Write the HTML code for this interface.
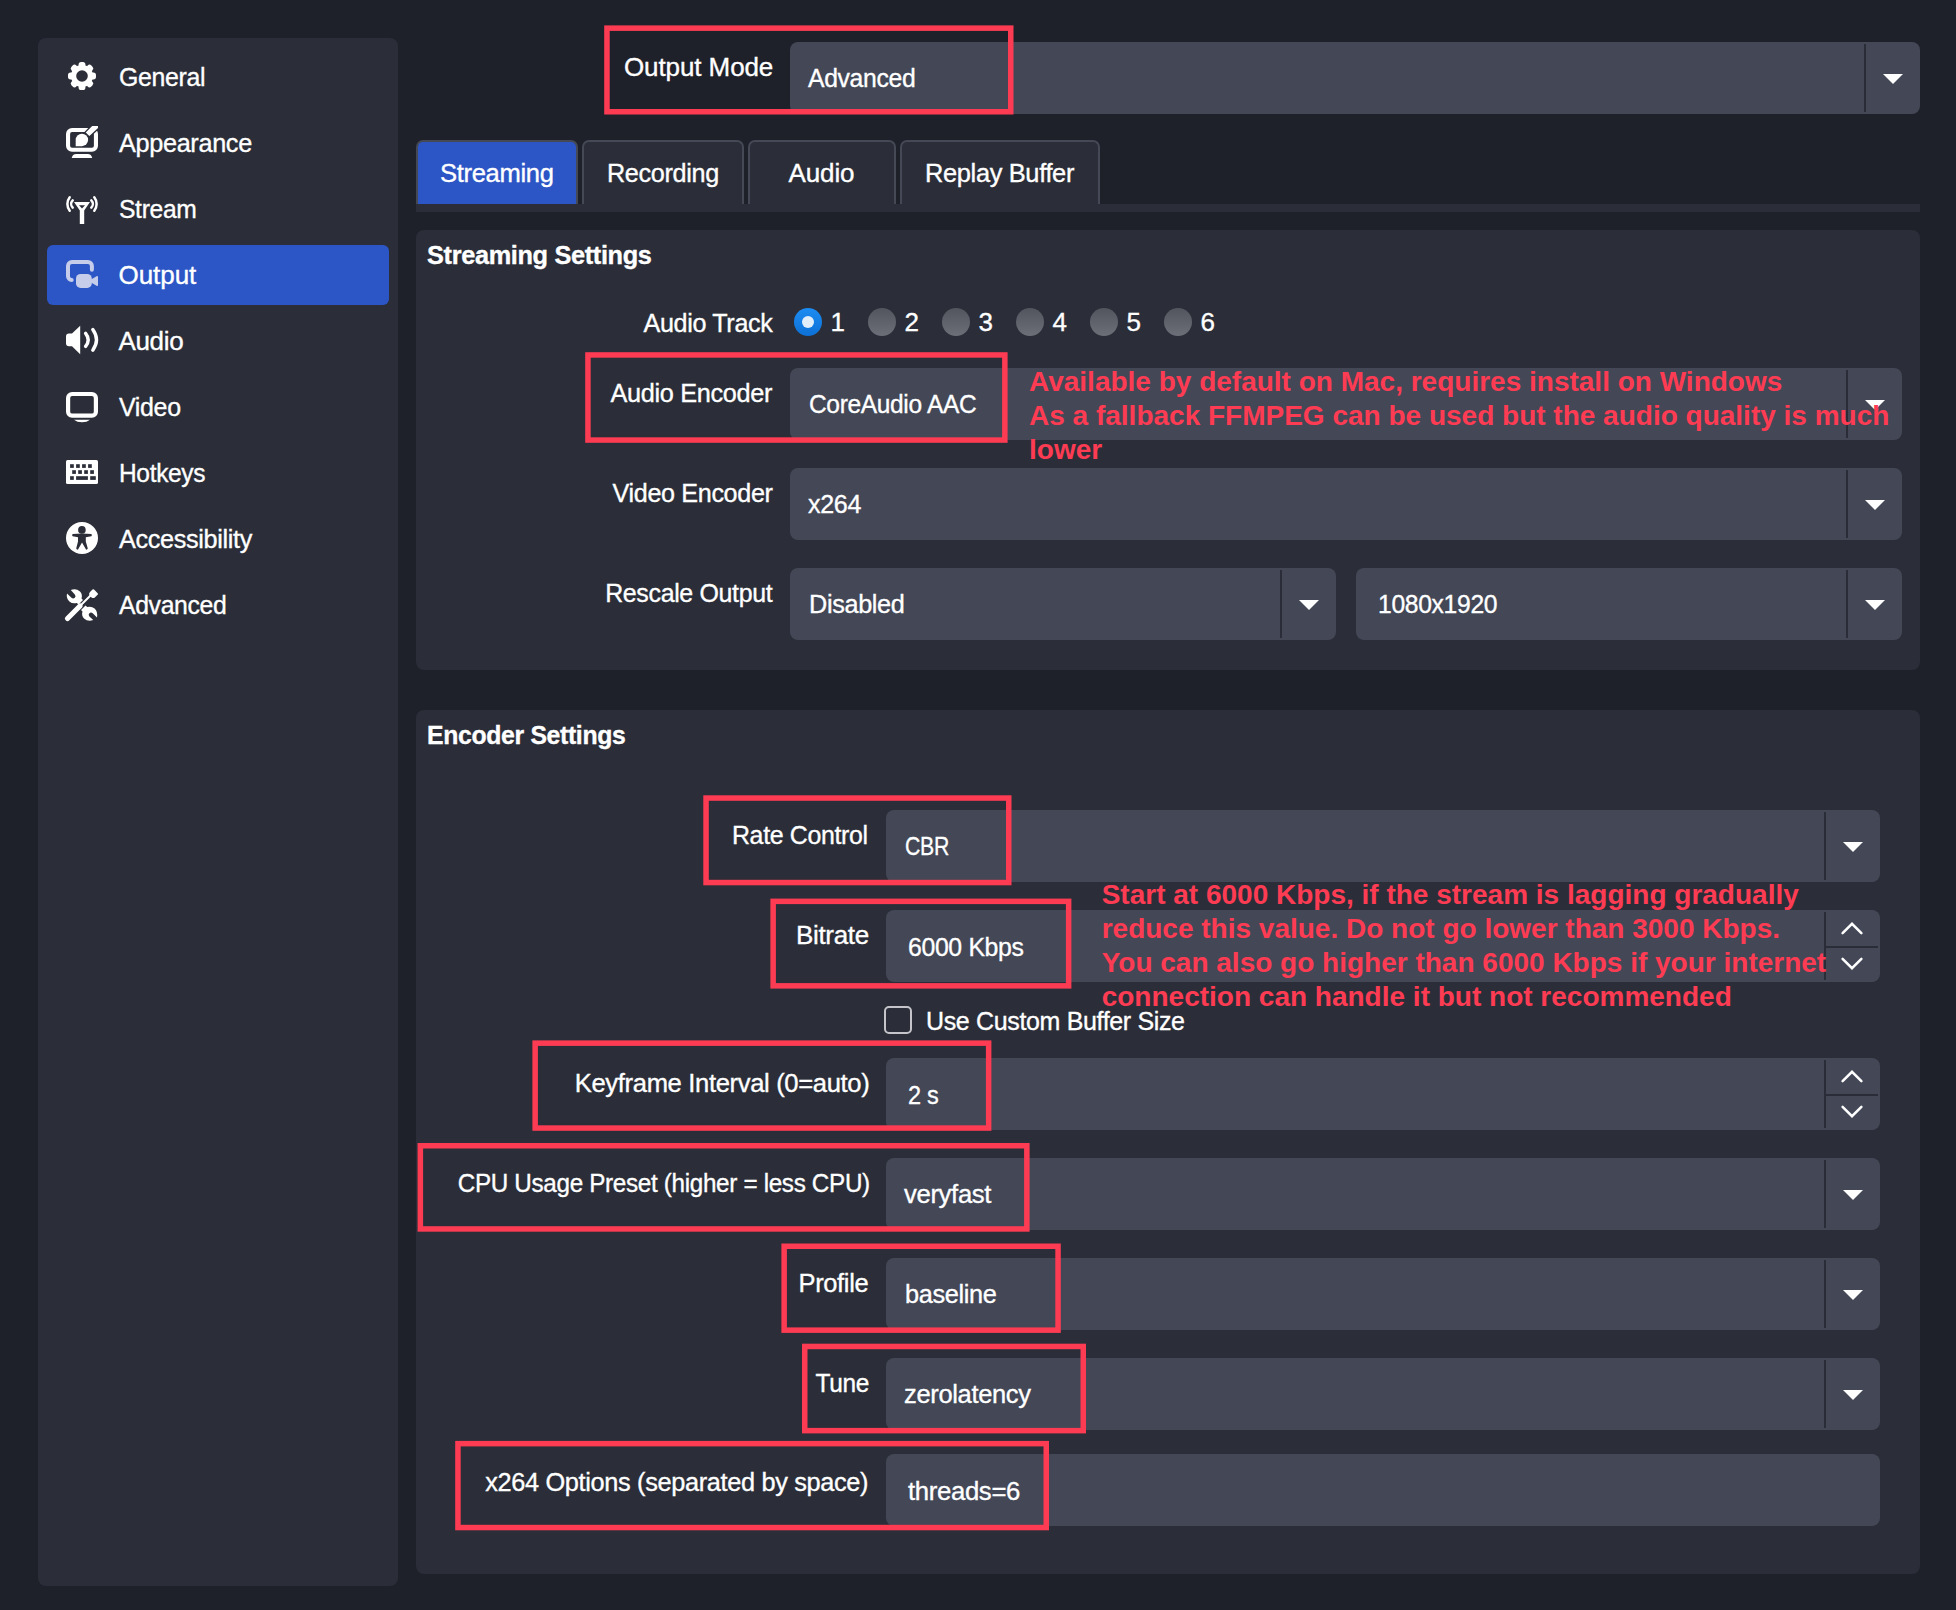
<!DOCTYPE html>
<html><head><meta charset="utf-8"><title>OBS Output Settings</title>
<style>
html,body{margin:0;padding:0}
body{width:1956px;height:1610px;overflow:hidden;position:relative;background:#1f212a;font-family:"Liberation Sans",sans-serif;color:#fff}
.r{position:absolute}
.t{position:absolute;white-space:nowrap;color:#fff;-webkit-text-stroke:0.35px currentColor}
</style></head><body>
<div class="r" style="left:38px;top:38px;width:360px;height:1548px;background:#2b2e38;border-radius:8px;"></div>
<div class="r" style="left:47px;top:245px;width:342px;height:60px;background:#2c55c6;border-radius:6px;"></div>
<div class="t" style="font-size:26px;line-height:30px;top:62px;letter-spacing:-0.350px;left:118.50px;transform:scaleX(0.9566);transform-origin:0.00px 0;">General</div>
<div class="t" style="font-size:26px;line-height:30px;top:128px;letter-spacing:-0.350px;left:118.50px;transform:scaleX(0.9719);transform-origin:0.00px 0;">Appearance</div>
<div class="t" style="font-size:26px;line-height:30px;top:194px;letter-spacing:-0.350px;left:118.50px;transform:scaleX(0.9483);transform-origin:0.00px 0;">Stream</div>
<div class="t" style="font-size:26px;line-height:30px;top:260px;letter-spacing:-0.060px;left:118.50px;">Output</div>
<div class="t" style="font-size:26px;line-height:30px;top:326px;letter-spacing:-0.350px;left:118.50px;">Audio</div>
<div class="t" style="font-size:26px;line-height:30px;top:392px;letter-spacing:-0.350px;left:118.50px;transform:scaleX(0.9598);transform-origin:0.00px 0;">Video</div>
<div class="t" style="font-size:26px;line-height:30px;top:458px;letter-spacing:-0.350px;left:118.50px;transform:scaleX(0.9423);transform-origin:0.00px 0;">Hotkeys</div>
<div class="t" style="font-size:26px;line-height:30px;top:524px;letter-spacing:-0.350px;left:118.50px;transform:scaleX(0.9702);transform-origin:0.00px 0;">Accessibility</div>
<div class="t" style="font-size:26px;line-height:30px;top:590px;letter-spacing:-0.350px;left:118.50px;transform:scaleX(0.9520);transform-origin:0.00px 0;">Advanced</div>
<svg class="r" style="left:66px;top:61px;overflow:visible" width="32" height="32" viewBox="0 0 32 32"><rect x="12.6" y="1" width="6.8" height="8" rx="2.6" fill="#ffffff" transform="rotate(0 16 15)"/><rect x="12.6" y="1" width="6.8" height="8" rx="2.6" fill="#ffffff" transform="rotate(45 16 15)"/><rect x="12.6" y="1" width="6.8" height="8" rx="2.6" fill="#ffffff" transform="rotate(90 16 15)"/><rect x="12.6" y="1" width="6.8" height="8" rx="2.6" fill="#ffffff" transform="rotate(135 16 15)"/><rect x="12.6" y="1" width="6.8" height="8" rx="2.6" fill="#ffffff" transform="rotate(180 16 15)"/><rect x="12.6" y="1" width="6.8" height="8" rx="2.6" fill="#ffffff" transform="rotate(225 16 15)"/><rect x="12.6" y="1" width="6.8" height="8" rx="2.6" fill="#ffffff" transform="rotate(270 16 15)"/><rect x="12.6" y="1" width="6.8" height="8" rx="2.6" fill="#ffffff" transform="rotate(315 16 15)"/><circle cx="16" cy="15" r="11" fill="#ffffff"/><circle cx="16" cy="15" r="5.8" fill="#2b2e38"/></svg>
<svg class="r" style="left:66px;top:127px;overflow:visible" width="32" height="32" viewBox="0 0 32 32"><rect x="2.05" y="2.95" width="27.9" height="19.8" rx="4" stroke="#ffffff" stroke-width="4.1" fill="none"/><path d="M5.7 31H26.2C25.8 28.5 24.2 26.9 21.7 26.9H10.2C7.7 26.9 6.1 28.5 5.7 31Z" fill="#ffffff"/><path d="M19.7 5.6L26.2 -1.1H32V1L23.4 9.1Z" fill="#2b2e38" stroke="#2b2e38" stroke-width="2.8" stroke-linejoin="round"/><path d="M9.7 19V12.95A6.2 6.2 0 1 1 15.9 19.15H9.7Z" fill="#ffffff" stroke="#2b2e38" stroke-width="0"/><path d="M19.7 5.6L26.2 -1.1H32V1L23.4 9.1Z" fill="#ffffff"/></svg>
<svg class="r" style="left:66px;top:193px;overflow:visible" width="32" height="32" viewBox="0 0 32 32"><path d="M3.7 4.2A11 11 0 0 0 3.7 17.7M6.7 7.3A5.3 5.3 0 0 0 6.7 14.7M28.3 4.2A11 11 0 0 1 28.3 17.7M25.3 7.3A5.3 5.3 0 0 1 25.3 14.7" stroke="#ffffff" stroke-width="2.5" fill="none" stroke-linecap="round"/><path d="M8 9H24L18.2 17.6V31H13.8V17.6Z" fill="#ffffff"/><path d="M13 12.2H19L16 15.6Z" fill="#2b2e38"/></svg>
<svg class="r" style="left:66px;top:259px;overflow:visible" width="32" height="32" viewBox="0 0 32 32"><path d="M5.7 20.9A3.7 3.7 0 0 1 2 17.2V7A4 4 0 0 1 6 3H21.9A4 4 0 0 1 25.9 7V10.8" stroke="#c5cdeb" stroke-width="4" fill="none" stroke-linecap="round"/><rect x="10" y="14.9" width="15.8" height="14" rx="4.5" fill="#c5cdeb"/><path d="M25 20.5L30.5 17.2Q32 16.6 32 18V26Q32 27.4 30.5 26.8L25 23.5Z" fill="#c5cdeb"/></svg>
<svg class="r" style="left:66px;top:325px;overflow:visible" width="32" height="32" viewBox="0 0 32 32"><path d="M3 8.4H6L14.2 0.7V29.2L6 21.2H3A3 3 0 0 1 0 18.2V11.4A3 3 0 0 1 3 8.4Z" fill="#ffffff"/><path d="M19.6 8.4Q24.8 14.9 19.6 21.4M26.8 4.6Q34.2 14.9 26.8 25.2" stroke="#ffffff" stroke-width="3.4" fill="none" stroke-linecap="round"/></svg>
<svg class="r" style="left:66px;top:391px;overflow:visible" width="32" height="32" viewBox="0 0 32 32"><rect x="2.1" y="3" width="27.8" height="21.7" rx="4" stroke="#ffffff" stroke-width="4.2" fill="none"/><path d="M8 28.7H24Q21 31.2 16 31.2Q11 31.2 8 28.7Z" fill="#ffffff"/></svg>
<svg class="r" style="left:66px;top:457px;overflow:visible" width="32" height="32" viewBox="0 0 32 32"><rect x="0" y="2.9" width="32" height="24.1" rx="1.6" fill="#ffffff"/><rect x="4.1" y="7.2" width="3.7" height="3.7" fill="#2b2e38"/><rect x="10.1" y="7.2" width="3.7" height="3.7" fill="#2b2e38"/><rect x="16.1" y="7.2" width="3.7" height="3.7" fill="#2b2e38"/><rect x="22.1" y="7.2" width="3.7" height="3.7" fill="#2b2e38"/><rect x="6.2" y="13.2" width="3.7" height="3.7" fill="#2b2e38"/><rect x="12.2" y="13.2" width="3.7" height="3.7" fill="#2b2e38"/><rect x="18.2" y="13.2" width="3.7" height="3.7" fill="#2b2e38"/><rect x="24.2" y="13.2" width="3.7" height="3.7" fill="#2b2e38"/><rect x="4.1" y="19.2" width="3.7" height="3.7" fill="#2b2e38"/><rect x="10.1" y="19.2" width="11.8" height="3.7" fill="#2b2e38"/><rect x="24.2" y="19.2" width="5.6" height="3.7" fill="#2b2e38"/></svg>
<svg class="r" style="left:66px;top:523px;overflow:visible" width="32" height="32" viewBox="0 0 32 32"><circle cx="16" cy="15" r="16" fill="#ffffff"/><circle cx="15.9" cy="6.9" r="3.8" fill="#2b2e38"/><path d="M6.6 10.9Q16 10.1 25.4 10.9Q26.4 12.1 25.4 13.2Q22.5 13.5 19.8 14.2V18.5L21.8 25.6Q21.2 27 20 26.6L16 19.6L12 26.6Q10.8 27 10.2 25.6L12 18.5V14.2Q9.5 13.5 6.6 13.2Q5.6 12.1 6.6 10.9Z" fill="#2b2e38"/></svg>
<svg class="r" style="left:66px;top:589px;overflow:visible" width="32" height="32" viewBox="0 0 32 32"><path d="M1.5 29.5L14 17" stroke="#ffffff" stroke-width="5.2" stroke-linecap="round"/><path d="M13 18L25 6" stroke="#ffffff" stroke-width="2"/><path d="M23.8 3.2L26.5 0.5Q27.3 -0.2 28 0.5L31.7 4.2Q32.3 5 31.6 5.7L28.8 8.4Q27.5 9.6 25.5 8.5L23.5 6.5Q22.5 4.6 23.8 3.2Z" fill="#ffffff"/><path d="M1 4.5L5.5 8.8Q7.2 10.3 8.8 8.8Q10.3 7.2 8.8 5.5L4.8 1Q10 -1 14 2.5Q16.8 5.5 15.5 9.5L17 11L12.5 15.5L10.8 14Q6.5 15.2 3.4 12.4Q0 9.2 1 4.5Z" fill="#ffffff"/><path d="M31 31.5L26.7 27.2Q25 25.7 23.4 27.2Q21.9 28.8 23.4 30.5L27.2 34Q22 36 18 32.5Q15.2 29.5 16.5 25.5L15 24L19.5 19.5L21.2 21Q25.5 19.8 28.6 22.6Q32 25.8 31 31.5Z" fill="#ffffff" transform="translate(0 -3)"/></svg>
<div class="r" style="left:790px;top:42px;width:1130px;height:72px;background:#434756;border-radius:8px;"></div>
<div class="r" style="left:1864px;top:44px;width:2px;height:68px;background:#2a2d37;"></div>
<svg class="r" style="left:1883px;top:74px" width="20" height="10"><path d="M0 0H20L10 10Z" fill="#fff"/></svg>
<div class="t" style="font-size:26px;line-height:30px;top:52px;letter-spacing:-0.100px;left:624.00px;">Output Mode</div>
<div class="t" style="font-size:26px;line-height:30px;top:63px;letter-spacing:-0.350px;left:808.00px;transform:scaleX(0.9511);transform-origin:0.00px 0;">Advanced</div>
<div class="r" style="left:416px;top:204px;width:1504px;height:8px;background:#2b2e38;"></div>
<div class="r" style="left:416px;top:140px;width:162px;height:64px;box-sizing:border-box;border:2px solid #454955;border-bottom:none;border-radius:7px 7px 0 0;background:#2c55c6"></div>
<div class="t" style="font-size:26px;line-height:30px;top:158px;letter-spacing:-0.350px;left:440.00px;transform:scaleX(0.9844);transform-origin:0.00px 0;">Streaming</div>
<div class="r" style="left:582px;top:140px;width:162px;height:64px;box-sizing:border-box;border:2px solid #454955;border-bottom:none;border-radius:7px 7px 0 0;background:#2b2e38"></div>
<div class="t" style="font-size:26px;line-height:30px;top:158px;letter-spacing:-0.350px;left:606.50px;transform:scaleX(0.9696);transform-origin:0.00px 0;">Recording</div>
<div class="r" style="left:748px;top:140px;width:148px;height:64px;box-sizing:border-box;border:2px solid #454955;border-bottom:none;border-radius:7px 7px 0 0;background:#2b2e38"></div>
<div class="t" style="font-size:26px;line-height:30px;top:158px;letter-spacing:-0.125px;left:788.50px;">Audio</div>
<div class="r" style="left:900px;top:140px;width:200px;height:64px;box-sizing:border-box;border:2px solid #454955;border-bottom:none;border-radius:7px 7px 0 0;background:#2b2e38"></div>
<div class="t" style="font-size:26px;line-height:30px;top:158px;letter-spacing:-0.350px;left:924.70px;transform:scaleX(0.9771);transform-origin:0.00px 0;">Replay Buffer</div>
<div class="r" style="left:416px;top:230px;width:1504px;height:440px;background:#2b2e38;border-radius:8px;"></div>
<div class="t" style="font-size:26px;font-weight:bold;line-height:30px;top:240px;letter-spacing:-0.350px;left:427.30px;transform:scaleX(0.9738);transform-origin:0.00px 0;">Streaming Settings</div>
<div class="t" style="font-size:26px;line-height:30px;top:308px;letter-spacing:-0.350px;left:638.50px;transform:scaleX(0.9665);transform-origin:134.50px 0;">Audio Track</div>
<svg class="r" style="left:794px;top:308px" width="28" height="28"><defs><linearGradient id="rb" x1="0" y1="0" x2="0" y2="1"><stop offset="0" stop-color="#1d8cf2"/><stop offset="1" stop-color="#0d70d6"/></linearGradient></defs><circle cx="14" cy="14" r="14" fill="url(#rb)"/><circle cx="14" cy="14" r="6" fill="#e3eefb"/></svg>
<div class="t" style="font-size:26px;line-height:30px;top:307px;left:830.50px;">1</div>
<svg class="r" style="left:868px;top:308px" width="28" height="28"><defs><linearGradient id="rg1" x1="0" y1="0" x2="0" y2="1"><stop offset="0" stop-color="#52555d"/><stop offset="1" stop-color="#6c6f77"/></linearGradient></defs><circle cx="14" cy="14" r="14" fill="url(#rg1)"/></svg>
<div class="t" style="font-size:26px;line-height:30px;top:307px;left:904.50px;">2</div>
<svg class="r" style="left:942px;top:308px" width="28" height="28"><defs><linearGradient id="rg2" x1="0" y1="0" x2="0" y2="1"><stop offset="0" stop-color="#52555d"/><stop offset="1" stop-color="#6c6f77"/></linearGradient></defs><circle cx="14" cy="14" r="14" fill="url(#rg2)"/></svg>
<div class="t" style="font-size:26px;line-height:30px;top:307px;left:978.50px;">3</div>
<svg class="r" style="left:1016px;top:308px" width="28" height="28"><defs><linearGradient id="rg3" x1="0" y1="0" x2="0" y2="1"><stop offset="0" stop-color="#52555d"/><stop offset="1" stop-color="#6c6f77"/></linearGradient></defs><circle cx="14" cy="14" r="14" fill="url(#rg3)"/></svg>
<div class="t" style="font-size:26px;line-height:30px;top:307px;left:1052.50px;">4</div>
<svg class="r" style="left:1090px;top:308px" width="28" height="28"><defs><linearGradient id="rg4" x1="0" y1="0" x2="0" y2="1"><stop offset="0" stop-color="#52555d"/><stop offset="1" stop-color="#6c6f77"/></linearGradient></defs><circle cx="14" cy="14" r="14" fill="url(#rg4)"/></svg>
<div class="t" style="font-size:26px;line-height:30px;top:307px;left:1126.50px;">5</div>
<svg class="r" style="left:1164px;top:308px" width="28" height="28"><defs><linearGradient id="rg5" x1="0" y1="0" x2="0" y2="1"><stop offset="0" stop-color="#52555d"/><stop offset="1" stop-color="#6c6f77"/></linearGradient></defs><circle cx="14" cy="14" r="14" fill="url(#rg5)"/></svg>
<div class="t" style="font-size:26px;line-height:30px;top:307px;left:1200.50px;">6</div>
<div class="r" style="left:790px;top:368px;width:1112px;height:72px;background:#434756;border-radius:8px;"></div>
<div class="r" style="left:1846px;top:370px;width:2px;height:68px;background:#2a2d37;"></div>
<svg class="r" style="left:1865px;top:400px" width="20" height="10"><path d="M0 0H20L10 10Z" fill="#fff"/></svg>
<div class="t" style="font-size:26px;line-height:30px;top:378px;letter-spacing:-0.350px;left:605.60px;transform:scaleX(0.9730);transform-origin:166.80px 0;">Audio Encoder</div>
<div class="t" style="font-size:26px;line-height:30px;top:389px;letter-spacing:-0.350px;left:808.80px;transform:scaleX(0.9421);transform-origin:0.00px 0;">CoreAudio AAC</div>
<div class="r" style="left:790px;top:468px;width:1112px;height:72px;background:#434756;border-radius:8px;"></div>
<div class="r" style="left:1846px;top:470px;width:2px;height:68px;background:#2a2d37;"></div>
<svg class="r" style="left:1865px;top:500px" width="20" height="10"><path d="M0 0H20L10 10Z" fill="#fff"/></svg>
<div class="t" style="font-size:26px;line-height:30px;top:478px;letter-spacing:-0.350px;left:606.60px;transform:scaleX(0.9662);transform-origin:165.80px 0;">Video Encoder</div>
<div class="t" style="font-size:26px;line-height:30px;top:489px;letter-spacing:-0.350px;left:808.00px;transform:scaleX(0.9645);transform-origin:0.00px 0;">x264</div>
<div class="r" style="left:790px;top:568px;width:546px;height:72px;background:#434756;border-radius:8px;"></div>
<div class="r" style="left:1280px;top:570px;width:2px;height:68px;background:#2a2d37;"></div>
<svg class="r" style="left:1299px;top:600px" width="20" height="10"><path d="M0 0H20L10 10Z" fill="#fff"/></svg>
<div class="r" style="left:1356px;top:568px;width:546px;height:72px;background:#434756;border-radius:8px;"></div>
<div class="r" style="left:1846px;top:570px;width:2px;height:68px;background:#2a2d37;"></div>
<svg class="r" style="left:1865px;top:600px" width="20" height="10"><path d="M0 0H20L10 10Z" fill="#fff"/></svg>
<div class="t" style="font-size:26px;line-height:30px;top:578px;letter-spacing:-0.350px;left:597.55px;transform:scaleX(0.9592);transform-origin:175.45px 0;">Rescale Output</div>
<div class="t" style="font-size:26px;line-height:30px;top:589px;letter-spacing:-0.350px;left:809.30px;transform:scaleX(0.9711);transform-origin:0.00px 0;">Disabled</div>
<div class="t" style="font-size:26px;line-height:30px;top:589px;letter-spacing:-0.350px;left:1377.60px;transform:scaleX(0.9493);transform-origin:0.00px 0;">1080x1920</div>
<div class="r" style="left:416px;top:710px;width:1504px;height:864px;background:#2b2e38;border-radius:8px;"></div>
<div class="t" style="font-size:26px;font-weight:bold;line-height:30px;top:720px;letter-spacing:-0.350px;left:427.30px;transform:scaleX(0.9533);transform-origin:0.00px 0;">Encoder Settings</div>
<div class="r" style="left:886px;top:810px;width:994px;height:72px;background:#434756;border-radius:8px;"></div>
<div class="r" style="left:1824px;top:812px;width:2px;height:68px;background:#2a2d37;"></div>
<svg class="r" style="left:1843px;top:842px" width="20" height="10"><path d="M0 0H20L10 10Z" fill="#fff"/></svg>
<div class="t" style="font-size:26px;line-height:30px;top:820px;letter-spacing:-0.350px;left:726.35px;transform:scaleX(0.9581);transform-origin:142.15px 0;">Rate Control</div>
<div class="t" style="font-size:26px;line-height:30px;top:831px;letter-spacing:-0.350px;left:904.80px;transform:scaleX(0.8177);transform-origin:0.00px 0;">CBR</div>
<div class="r" style="left:886px;top:910px;width:994px;height:72px;background:#434756;border-radius:8px;"></div>
<div class="r" style="left:1824px;top:912px;width:2px;height:68px;background:#2a2d37;"></div>
<div class="r" style="left:1826px;top:946px;width:52px;height:2px;background:#2a2d37;"></div>
<svg class="r" style="left:1839px;top:920px" width="26" height="16"><path d="M3.6 13.2L13 3.8L22.4 13.2" stroke="#fff" stroke-width="2.5" fill="none" stroke-linecap="round"/></svg>
<svg class="r" style="left:1839px;top:956px" width="26" height="16"><path d="M3.6 2.8L13 12.2L22.4 2.8" stroke="#fff" stroke-width="2.5" fill="none" stroke-linecap="round"/></svg>
<div class="t" style="font-size:26px;line-height:30px;top:920px;letter-spacing:-0.333px;left:796.00px;">Bitrate</div>
<div class="t" style="font-size:26px;line-height:30px;top:932px;letter-spacing:-0.350px;left:908.40px;transform:scaleX(0.9538);transform-origin:0.00px 0;">6000 Kbps</div>
<div class="r" style="left:884px;top:1006px;width:28px;height:28px;box-sizing:border-box;border:2.3px solid #c4c4ca;border-radius:5px"></div>
<div class="t" style="font-size:26px;line-height:30px;top:1006px;letter-spacing:-0.350px;left:925.50px;transform:scaleX(0.9605);transform-origin:0.00px 0;">Use Custom Buffer Size</div>
<div class="r" style="left:886px;top:1058px;width:994px;height:72px;background:#434756;border-radius:8px;"></div>
<div class="r" style="left:1824px;top:1060px;width:2px;height:68px;background:#2a2d37;"></div>
<div class="r" style="left:1826px;top:1094px;width:52px;height:2px;background:#2a2d37;"></div>
<svg class="r" style="left:1839px;top:1068px" width="26" height="16"><path d="M3.6 13.2L13 3.8L22.4 13.2" stroke="#fff" stroke-width="2.5" fill="none" stroke-linecap="round"/></svg>
<svg class="r" style="left:1839px;top:1104px" width="26" height="16"><path d="M3.6 2.8L13 12.2L22.4 2.8" stroke="#fff" stroke-width="2.5" fill="none" stroke-linecap="round"/></svg>
<div class="t" style="font-size:26px;line-height:30px;top:1068px;letter-spacing:-0.350px;left:570.45px;transform:scaleX(0.9841);transform-origin:299.25px 0;">Keyframe Interval (0=auto)</div>
<div class="t" style="font-size:26px;line-height:30px;top:1080px;letter-spacing:-0.350px;left:908.30px;transform:scaleX(0.9038);transform-origin:0.00px 0;">2 s</div>
<div class="r" style="left:886px;top:1158px;width:994px;height:72px;background:#434756;border-radius:8px;"></div>
<div class="r" style="left:1824px;top:1160px;width:2px;height:68px;background:#2a2d37;"></div>
<svg class="r" style="left:1843px;top:1190px" width="20" height="10"><path d="M0 0H20L10 10Z" fill="#fff"/></svg>
<div class="t" style="font-size:26px;line-height:30px;top:1168px;letter-spacing:-0.350px;left:427.95px;transform:scaleX(0.9327);transform-origin:441.75px 0;">CPU Usage Preset (higher = less CPU)</div>
<div class="t" style="font-size:26px;line-height:30px;top:1179px;letter-spacing:-0.350px;left:903.90px;transform:scaleX(0.9872);transform-origin:0.00px 0;">veryfast</div>
<div class="r" style="left:886px;top:1258px;width:994px;height:72px;background:#434756;border-radius:8px;"></div>
<div class="r" style="left:1824px;top:1260px;width:2px;height:68px;background:#2a2d37;"></div>
<svg class="r" style="left:1843px;top:1290px" width="20" height="10"><path d="M0 0H20L10 10Z" fill="#fff"/></svg>
<div class="t" style="font-size:26px;line-height:30px;top:1268px;letter-spacing:-0.350px;left:797.10px;transform:scaleX(0.9791);transform-origin:71.90px 0;">Profile</div>
<div class="t" style="font-size:26px;line-height:30px;top:1279px;letter-spacing:-0.350px;left:904.90px;transform:scaleX(0.9730);transform-origin:0.00px 0;">baseline</div>
<div class="r" style="left:886px;top:1358px;width:994px;height:72px;background:#434756;border-radius:8px;"></div>
<div class="r" style="left:1824px;top:1360px;width:2px;height:68px;background:#2a2d37;"></div>
<svg class="r" style="left:1843px;top:1390px" width="20" height="10"><path d="M0 0H20L10 10Z" fill="#fff"/></svg>
<div class="t" style="font-size:26px;line-height:30px;top:1368px;letter-spacing:-0.350px;left:812.05px;transform:scaleX(0.9394);transform-origin:56.95px 0;">Tune</div>
<div class="t" style="font-size:26px;line-height:30px;top:1379px;letter-spacing:-0.350px;left:904.00px;transform:scaleX(0.9807);transform-origin:0.00px 0;">zerolatency</div>
<div class="r" style="left:886px;top:1454px;width:994px;height:72px;background:#434756;border-radius:8px;"></div>
<div class="t" style="font-size:26px;line-height:30px;top:1467px;letter-spacing:-0.350px;left:475.30px;transform:scaleX(0.9741);transform-origin:393.80px 0;">x264 Options (separated by space)</div>
<div class="t" style="font-size:26px;line-height:30px;top:1476px;letter-spacing:-0.350px;left:908.30px;transform:scaleX(0.9894);transform-origin:0.00px 0;">threads=6</div>
<div class="t" style="font-size:28px;font-weight:bold;line-height:34px;top:365px;left:1029.00px;color:#fd3c54;-webkit-text-stroke:0;">Available by default on Mac, requires install on Windows</div>
<div class="t" style="font-size:28px;font-weight:bold;line-height:34px;top:399px;left:1029.00px;color:#fd3c54;-webkit-text-stroke:0;">As a fallback FFMPEG can be used but the audio quality is much</div>
<div class="t" style="font-size:28px;font-weight:bold;line-height:34px;top:433px;left:1029.00px;color:#fd3c54;-webkit-text-stroke:0;">lower</div>
<div class="t" style="font-size:28px;font-weight:bold;line-height:34px;top:878px;left:1101.70px;color:#fd3c54;-webkit-text-stroke:0;">Start at 6000 Kbps, if the stream is lagging gradually</div>
<div class="t" style="font-size:28px;font-weight:bold;line-height:34px;top:912px;left:1101.70px;color:#fd3c54;-webkit-text-stroke:0;">reduce this value. Do not go lower than 3000 Kbps.</div>
<div class="t" style="font-size:28px;font-weight:bold;line-height:34px;top:946px;left:1101.70px;color:#fd3c54;-webkit-text-stroke:0;">You can also go higher than 6000 Kbps if your internet</div>
<div class="t" style="font-size:28px;font-weight:bold;line-height:34px;top:980px;left:1101.70px;color:#fd3c54;-webkit-text-stroke:0;">connection can handle it but not recommended</div>
<svg class="r" style="left:0;top:0" width="1956" height="1610"><g fill="none" stroke="#fd3c54" stroke-width="5.5"><rect x="606.95" y="28.15" width="403.80" height="83.60"/><rect x="587.95" y="354.95" width="416.90" height="85.10"/><rect x="706.05" y="798.05" width="302.70" height="84.50"/><rect x="773.15" y="901.35" width="295.50" height="84.50"/><rect x="535.15" y="1043.15" width="453.50" height="84.90"/><rect x="420.35" y="1145.75" width="606.50" height="83.20"/><rect x="784.15" y="1246.25" width="273.90" height="83.90"/><rect x="804.75" y="1346.45" width="278.50" height="84.20"/><rect x="457.95" y="1443.65" width="588.30" height="83.90"/></g></svg>
</body></html>
